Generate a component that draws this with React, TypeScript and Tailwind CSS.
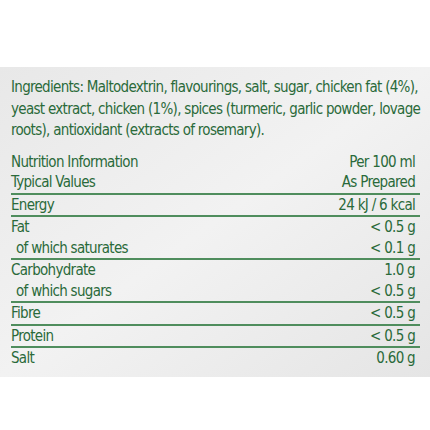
const rows: { label: string; value: string; sub?: boolean }[][] = [
  [{ label: 'Energy', value: '24 kJ / 6 kcal' }],
  [
    { label: 'Fat', value: '< 0.5 g' },
    { label: 'of which saturates', value: '< 0.1 g', sub: true },
  ],
  [
    { label: 'Carbohydrate', value: '1.0 g' },
    { label: 'of which sugars', value: '< 0.5 g', sub: true },
  ],
  [{ label: 'Fibre', value: '< 0.5 g' }],
  [{ label: 'Protein', value: '< 0.5 g' }],
  [{ label: 'Salt', value: '0.60 g' }],
]

export default function App() {
  return (
    <div
      className="w-[430px] h-[430px] bg-white text-[#2a6a3a]"
      style={{ fontFamily: '"Liberation Sans Narrow", "DejaVu Sans Condensed", "Liberation Sans", sans-serif' }}
    >
      <div className="h-[67px]" />
      <div className="h-[310px] bg-gradient-to-br from-[#e8e8e8] via-[#f2f2f2] to-[#e5e5e5] pt-[10px] pl-[11px] pr-[10px] text-[15px] tracking-[-0.7px]">
        <p className="leading-[21.5px] -mr-[4px]">
          Ingredients: Maltodextrin, flavourings, salt, sugar, chicken fat (4%), yeast extract, chicken (1%), spices
          (turmeric, garlic powder, lovage roots), antioxidant (extracts of rosemary).
        </p>

        <div className="mt-[10px] leading-[20.5px]">
          <div className="flex justify-between pr-[5px]">
            <span>Nutrition Information</span>
            <span>Per 100 ml</span>
          </div>
          <div className="flex justify-between pr-[5px] border-b-2 border-[#4f8d5d]">
            <span>Typical Values</span>
            <span>As Prepared</span>
          </div>
          {rows.map((group, i) => (
            <div key={i} className={i < rows.length - 1 ? 'border-b-2 border-[#4f8d5d]' : ''}>
              {group.map((r) => (
                <div key={r.label} className="flex justify-between pr-[5px]">
                  <span className={r.sub ? 'pl-[5px]' : ''}>{r.label}</span>
                  <span>{r.value}</span>
                </div>
              ))}
            </div>
          ))}
        </div>
      </div>
    </div>
  )
}
